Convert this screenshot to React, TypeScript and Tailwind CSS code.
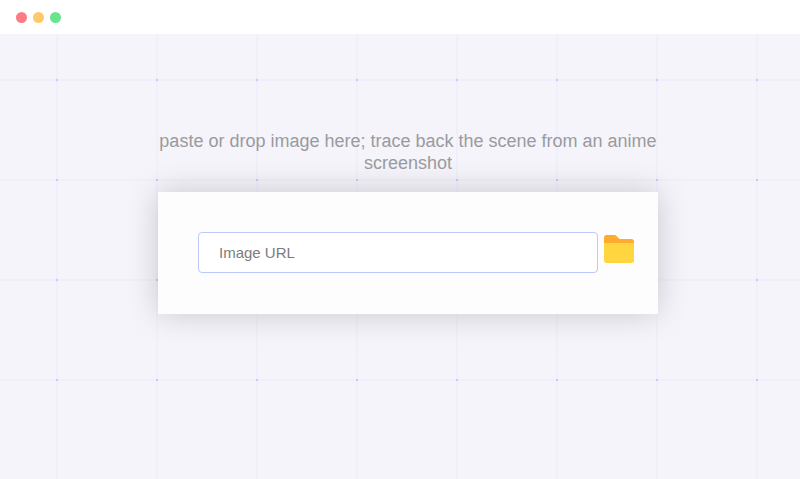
const Folder = () => (
  <svg width="32" height="30" viewBox="0 0 32 30" className="shrink-0">
    <path d="M1 3.500C1 1.800 2.300 1 3.500 1H11c1.500 0 2.200.6 3.200 1.700L16.500 5H28.500C30 5 31 6 31 7.500V12H1Z" fill="#ffab2e" />
    <path d="M1 9H31V26.500C31 28 30 29 28.500 29H3.500C2 29 1 28 1 26.500Z" fill="#ffd540" />
  </svg>
);

const App = () => {
  return (
    <div className="h-[479px] w-[800px] overflow-hidden bg-[#f4f4fa] font-['Liberation_Sans',Arial,sans-serif]">
      <header className="flex h-[34px] items-center gap-[6px] bg-white pl-[16px]">
        <span className="h-[11px] w-[11px] rounded-full bg-[#ff7b83]" />
        <span className="h-[11px] w-[11px] rounded-full bg-[#ffc96b]" />
        <span className="h-[11px] w-[11px] rounded-full bg-[#66e68c]" />
      </header>

      <main className="h-[445px] bg-[radial-gradient(circle_at_1px_1px,#c9c9fd_1.42px,transparent_1.42px),linear-gradient(to_right,#f0f0fb_2px,transparent_2px),linear-gradient(to_bottom,#f0f0fb_2px,transparent_2px)] bg-[size:100px_100px] bg-[position:56px_45px] pl-[158px] pt-[96px]">
        <p className="w-[500px] text-center text-[18px] leading-[22px] text-[#9a9a9f]">
          paste or drop image here; trace back the scene from an anime screenshot
        </p>
        <div className="mt-[18px] flex h-[122px] w-[500px] items-start bg-[#fdfdfd] pl-[40px] pt-[40px] shadow-[0_0_30px_rgba(0,0,0,0.18)]">
          <input
            placeholder="Image URL"
            className="h-[41px] w-[400px] rounded-[4px] border-[1.5px] border-[#bcc8fb] bg-white px-[20px] text-[15px] text-[#7c7c7c] outline-none placeholder:text-[#7c7c7c]"
          />
          <span className="ml-[5px] mt-[2px] flex">
            <Folder />
          </span>
        </div>
      </main>
    </div>
  );
};

export default App;
